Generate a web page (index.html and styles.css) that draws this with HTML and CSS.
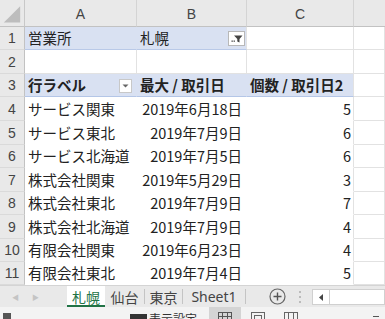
FILE: index.html
```html
<!DOCTYPE html>
<html lang="ja">
<head>
<meta charset="utf-8">
<link rel="stylesheet" href="styles.css">
</head>
<body>
<div class="app">
  <div class="sheet">
    <div class="hd corner"><svg width="25" height="27" viewBox="0 0 25 27"><polygon points="4,23 21,23 21,6" fill="#bdbdbd"/></svg></div>
    <div class="hd col">A</div>
    <div class="hd col">B</div>
    <div class="hd col">C</div>
    <div class="hd col last"></div>

    <div class="hd rn">1</div>
    <div class="c pv1">営業所</div>
    <div class="c pv1 pv1b"><span>札幌</span><span class="fbtn"><svg width="12" height="9" viewBox="0 0 12 9"><path d="M3 1.5h8.5L8.5 5v3.5L6.3 7.5V5z" fill="#444"/><rect x="0.5" y="6.5" width="1.3" height="1.3" fill="#444"/><rect x="2.6" y="6.5" width="1.3" height="1.3" fill="#444"/></svg></span></div>
    <div class="c"></div>
    <div class="c"></div>

    <div class="hd rn">2</div>
    <div class="c"></div>
    <div class="c"></div>
    <div class="c"></div>
    <div class="c"></div>

    <div class="hd rn">3</div>
    <div class="c ph"><span>行ラベル</span><span class="dbtn"><svg width="7" height="4" viewBox="0 0 7 4"><path d="M0.5 0.5h6L3.5 3.5z" fill="#666"/></svg></span></div>
    <div class="c ph">最大 / 取引日</div>
    <div class="c ph phc">個数 / 取引日2</div>
    <div class="c"></div>

    <div class="hd rn">4</div><div class="c pd">サービス関東</div><div class="c pd r">2019年6月18日</div><div class="c pd pdc r">5</div><div class="c"></div>
    <div class="hd rn">5</div><div class="c pd">サービス東北</div><div class="c pd r">2019年7月9日</div><div class="c pd pdc r">6</div><div class="c"></div>
    <div class="hd rn">6</div><div class="c pd">サービス北海道</div><div class="c pd r">2019年7月5日</div><div class="c pd pdc r">6</div><div class="c"></div>
    <div class="hd rn">7</div><div class="c pd">株式会社関東</div><div class="c pd r">2019年5月29日</div><div class="c pd pdc r">3</div><div class="c"></div>
    <div class="hd rn">8</div><div class="c pd">株式会社東北</div><div class="c pd r">2019年7月9日</div><div class="c pd pdc r">7</div><div class="c"></div>
    <div class="hd rn">9</div><div class="c pd">株式会社北海道</div><div class="c pd r">2019年7月9日</div><div class="c pd pdc r">4</div><div class="c"></div>
    <div class="hd rn">10</div><div class="c pd">有限会社関東</div><div class="c pd r">2019年6月23日</div><div class="c pd pdc r">4</div><div class="c"></div>
    <div class="hd rn">11</div><div class="c pd">有限会社東北</div><div class="c pd r">2019年7月4日</div><div class="c pd pdc r">5</div><div class="c"></div>
  </div>

  <div class="tabbar">
    <div class="nav"><span>&#9664;</span><span>&#9654;</span></div>
    <div class="tab active">札幌</div>
    <div class="tab">仙台</div>
    <div class="tab">東京</div>
    <div class="tab sheet1">Sheet1</div>
    <div class="plus"><svg width="17" height="17" viewBox="0 0 17 17"><circle cx="8.5" cy="8.5" r="7.5" fill="none" stroke="#666" stroke-width="1.2"/><path d="M8.5 4.5v8M4.5 8.5h8" stroke="#555" stroke-width="1.4"/></svg></div>
    <div class="dots"><i></i><i></i><i></i></div>
    <div class="hscroll"><span class="larr"><svg width="4" height="7" viewBox="0 0 4 7"><path d="M4 0v7L0 3.5z" fill="#444"/></svg></span></div>
  </div>

  <div class="status">
    <span class="st-left"></span>
    <span class="st-disp"><span class="sq"></span>表示設定</span>
    <span class="view active"><svg width="16" height="10" viewBox="0 0 16 10"><rect x="1.5" y="1.5" width="13" height="10" fill="none" stroke="#555"/><path d="M5.5 1.5v9M10.5 1.5v9M1.5 5.5h13" stroke="#555"/></svg></span>
    <span class="view"><svg width="16" height="10" viewBox="0 0 16 10"><rect x="1.5" y="1.5" width="13" height="10" fill="none" stroke="#666"/><rect x="4.5" y="4.5" width="7" height="6" fill="none" stroke="#666"/></svg></span>
    <span class="view"><svg width="16" height="10" viewBox="0 0 16 10"><rect x="1.5" y="1.5" width="13" height="10" fill="none" stroke="#666"/><path d="M5.5 1.5v9M10.5 1.5v9" stroke="#666"/></svg></span>
    <span class="zoomout"></span>
  </div>
</div>
</body>
</html>
```

FILE: styles.css
```css
* { box-sizing: border-box; }
html, body { margin: 0; padding: 0; background: #fff; }
.app {
  width: 385px;
  height: 319px;
  overflow: hidden;
  font-family: "Noto Sans CJK JP", "Noto Sans", sans-serif;
  color: #222;
}
.sheet {
  display: grid;
  grid-template-columns: 25px 112px 110px 107px 31px;
  grid-template-rows: 27px 23px 24px 23px 24px 24px 23px 24px 23px 24px 23px 23px;
  height: 285px;
}
.hd {
  background: #e9e9e9;
  color: #444;
  display: flex;
  align-items: center;
  justify-content: center;
  font-family: "Liberation Sans", "Noto Sans CJK JP", sans-serif;
  font-size: 14px;
}
.corner { border-right: 1px solid #c8c8c8; border-bottom: 1px solid #c2c2c2; }
.col { border-right: 1px solid #d4d4d4; border-bottom: 1px solid #c2c2c2; padding-top: 2px; }
.col.last { border-right: none; }
.rn { border-right: 1px solid #c2c2c2; border-bottom: 1px solid #dadada; font-size: 14px; }
.c {
  border-right: 1px solid #e2e2e2;
  border-bottom: 1px solid #e2e2e2;
  display: flex;
  align-items: center;
  padding: 1px 3px 0 3px;
  font-size: 14.5px;
  line-height: 1;
  white-space: nowrap;
  overflow: hidden;
}
.pv1 { background: #d9e1f2; border-right-color: #d9e1f2; border-bottom-color: #b9c9e8; }
.pv1b { justify-content: space-between; padding-right: 1px; border-right-color: #e2e2e2; }
.fbtn {
  width: 17px; height: 15px;
  background: #fff;
  border: 1px solid #b8b8b8;
  display: flex; align-items: center; justify-content: center;
}
.ph {
  background: #d9e1f2;
  font-weight: bold;
  border-right-color: #d9e1f2;
  border-bottom-color: #b4c6e7;
}
.ph:first-of-type { justify-content: space-between; }
.ph { justify-content: flex-start; }
.ph .dbtn {
  width: 13px; height: 14px;
  background: #fff;
  border: 1px solid #c8c8c8;
  display: flex; align-items: center; justify-content: center;
  margin-right: 1px;
  margin-top: 1px;
}
.c.ph:has(.dbtn) { justify-content: space-between; }
.phc { border-right-color: #e2e2e2; }
.pd { border-right-color: #fff; border-bottom-color: #fff; }
.pdc { border-right-color: #e2e2e2; }
.r { justify-content: flex-end; padding-right: 4px; }
.pdc.r { padding-right: 2px; }

.tabbar {
  height: 22px;
  background: #e9e9e9;
  border-top: 1px solid #d4d4d4;
  display: flex;
  align-items: stretch;
  font-size: 14px;
}
.nav {
  width: 67px;
  display: flex;
  align-items: center;
  gap: 13px;
  padding-left: 12px;
  color: #c4c4c4;
  font-size: 7px;
}
.tab {
  display: flex;
  align-items: center;
  justify-content: center;
  color: #444;
  border-right: 1px solid #c4c4c4;
  margin: 3px 0 3px;
  width: 40px;
  line-height: 1;
}
.tab.active {
  margin: 0;
  width: 38px;
  background: #fff;
  color: #217346;
  border-right: none;
  border-bottom: 2px solid #217346;
  padding-top: 2px;
}
.tab:nth-child(4) { width: 38px; }
.tab.sheet1 { width: 63px; font-family: "Noto Sans", sans-serif; font-size: 14px; }
.plus { display: flex; align-items: center; padding-left: 23px; }
.dots { width: 20px; display: flex; flex-direction: column; align-items: center; justify-content: center; gap: 3px; margin-left: 4px; }
.dots i { display: block; width: 2px; height: 2px; background: #bbb; }
.hscroll {
  flex: 1;
  margin: 3px 0 2px 2px;
  background: #fff;
  border: 1px solid #d0d0d0;
  display: flex;
}
.larr {
  width: 17px;
  border-right: 1px solid #d0d0d0;
  display: flex; align-items: center; justify-content: center;
}

.status {
  height: 12px;
  background: #f3f3f3;
  display: flex;
  align-items: flex-start;
  position: relative;
  font-size: 12px;
}
.st-left { width: 8px; height: 6px; background: #555; margin: 6px 0 0 3px; }
.st-disp { display: flex; gap: 2px; margin-left: 119px; padding-top: 6px; color: #333; line-height: 1; }
.st-disp .sq { width: 17px; height: 10px; background: #333; margin-top: 1px; }
.view { width: 32px; height: 12px; display: flex; justify-content: center; padding-top: 4px; }
.view.active { background: #d4d4d4; margin-left: 12px; }
.view + .view { margin-left: 1px; }
.view:last-of-type { margin-left: 1px; }
.zoomout { width: 6px; height: 1px; background: #555; margin: 9px 0 0 auto; margin-right: 6px; }
```
